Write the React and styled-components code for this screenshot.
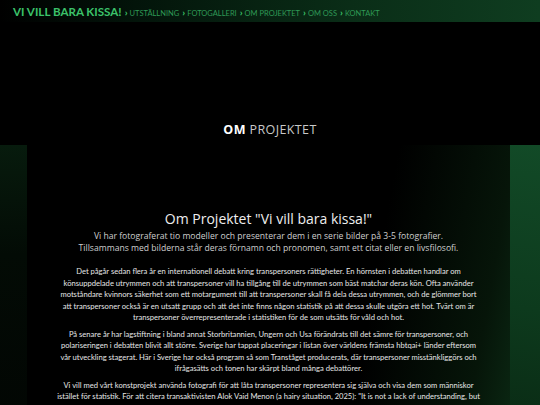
import React from 'react';
import styled, { createGlobalStyle } from 'styled-components';

const Global = createGlobalStyle`
  html, body { margin: 0; padding: 0; background: #000; }
  body { font-family: "Open Sans", sans-serif; color: #ddd; }
`;

const Header = styled.header`
  height: 22px;
  display: flex;
  align-items: center;
  padding: 0 13px;
  background: linear-gradient(to right, #000 0%, #03140a 25%, #0a2d17 65%, #0f3d20 100%);
`;

const Brand = styled.a`
  font-family: Lato, sans-serif;
  font-weight: 700;
  font-size: 11.6px;
  color: #3bc26a;
  text-decoration: none;
  margin-right: 3px;
  white-space: nowrap;
`;

const Nav = styled.nav`
  display: flex;
  align-items: center;
  gap: 3px;
  font-family: Lato, sans-serif;
  font-size: 7.5px;
  color: #2f9a56;
  padding-top: 2px;
  white-space: nowrap;
`;

const NavItem = styled.a`
  color: inherit;
  text-decoration: none;
  &::before {
    content: '›';
    font-weight: 700;
    font-size: 10px;
    margin-right: 2px;
    color: #3bc26a;
  }
`;

const Hero = styled.div`
  height: 123px;
  display: flex;
  align-items: flex-end;
  justify-content: center;
  padding-bottom: 7px;
  box-sizing: border-box;
`;

const PageTitle = styled.h1`
  margin: 0;
  font-family: "Open Sans", sans-serif;
  font-size: 12.5px;
  font-weight: 400;
  letter-spacing: 0.4px;
  color: #c8c8c8;
  b { color: #fff; font-weight: 700; }
`;

const Section = styled.section`
  min-height: 260px;
  display: flex;
  background: linear-gradient(190deg, #124a27 0%, #0d3a1d 45%, #0a2c15 75%, #071f0f 100%);
`;

const LeftStrip = styled.div`
  width: 27px;
  background: linear-gradient(to bottom, #071b0d 0%, #030b05 40%, #020603 100%);
`;

const Panel = styled.div`
  width: 483px;
  background: linear-gradient(100deg, #000 0%, #000 70%, #061509 92%, #0a2612 100%);
  padding: 64px 0 0;
  box-sizing: border-box;
  display: flex;
  flex-direction: column;
  align-items: center;
`;

const Heading = styled.h2`
  margin: 0 0 2px;
  font-family: "Open Sans", sans-serif;
  font-size: 14px;
  font-weight: 400;
  color: #eee;
`;

const Lead = styled.p`
  margin: 0 0 12px;
  text-align: center;
  font-size: 8.6px;
  line-height: 12px;
  color: #cfcfcf;
`;

const Body = styled.div`
  text-align: center;
  font-family: Lato, sans-serif;
  font-size: 7.6px;
  line-height: 11.5px;
  color: #e6e6e6;
  white-space: nowrap;
  p { margin: 0 0 5px; }
`;

const paragraphs = [
  [
    'Det pågår sedan flera år en internationell debatt kring transpersoners rättigheter. En hörnsten i debatten handlar om',
    'könsuppdelade utrymmen och att transpersoner vill ha tillgång till de utrymmen som bäst matchar deras kön. Ofta använder',
    'motståndare kvinnors säkerhet som ett motargument till att transpersoner skall få dela dessa utrymmen, och de glömmer bort',
    'att transpersoner också är en utsatt grupp och att det inte finns någon statistik på att dessa skulle utgöra ett hot. Tvärt om är',
    'transpersoner överrepresenterade i statistiken för de som utsätts för våld och hot.',
  ],
  [
    'På senare år har lagstiftning i bland annat Storbritannien, Ungern och Usa förändrats till det sämre för transpersoner, och',
    'polariseringen i debatten blivit allt större. Sverige har tappat placeringar i listan över världens främsta hbtqai+ länder eftersom',
    'vår utveckling stagerat. Här i Sverige har också program så som Tranståget producerats, där transpersoner misstänkliggörs och',
    'ifrågasätts och tonen har skärpt bland många debattörer.',
  ],
  [
    'Vi vill med vårt konstprojekt använda fotografi för att låta transpersoner representera sig själva och visa dem som människor',
    'istället för statistik. För att citera transaktivisten Alok Vaid Menon (a hairy situation, 2025): "It is not a lack of understanding, but',
    'a lack of imagination that keeps people from seeing us as we are."',
  ],
];

export default function App() {
  const nav = ['Utställning', 'Fotogalleri', 'Om projektet', 'Om oss', 'Kontakt'];
  return (
    <>
      <Global />
      <Header>
        <Brand href="#">VI VILL BARA KISSA!</Brand>
        <Nav>
          {nav.map((n) => (
            <NavItem key={n} href="#">{n.toUpperCase()}</NavItem>
          ))}
        </Nav>
      </Header>
      <Hero>
        <PageTitle><b>OM</b> PROJEKTET</PageTitle>
      </Hero>
      <Section>
        <LeftStrip />
        <Panel>
          <Heading>Om Projektet "Vi vill bara kissa!"</Heading>
          <Lead>
            Vi har fotograferat tio modeller och presenterar dem i en serie bilder på 3-5 fotografier.<br />
            Tillsammans med bilderna står deras förnamn och pronomen, samt ett citat eller en livsfilosofi.
          </Lead>
          <Body>
            {paragraphs.map((lines, i) => (
              <p key={i}>
                {lines.map((l, j) => (
                  <React.Fragment key={j}>{l}{j < lines.length - 1 && <br />}</React.Fragment>
                ))}
              </p>
            ))}
          </Body>
        </Panel>
      </Section>
    </>
  );
}
